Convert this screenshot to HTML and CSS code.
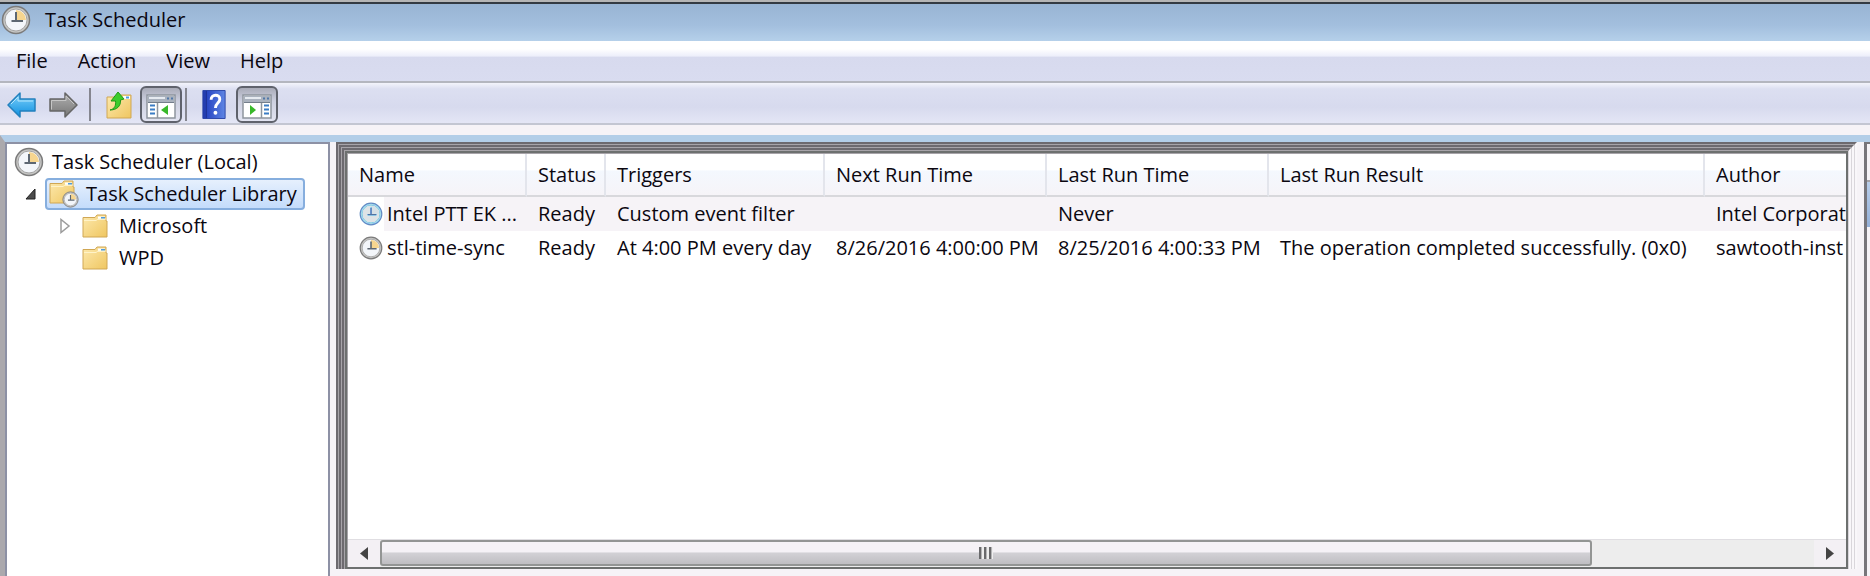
FILE: index.html
```
<!DOCTYPE html>
<html lang="en">
<head>
<meta charset="utf-8">
<title>Task Scheduler</title>
<link rel="stylesheet" href="styles.css">
</head>
<body>
<svg class="defs" aria-hidden="true">
  <defs>
    <linearGradient id="gold" x1="0" y1="0" x2="1" y2="1"><stop offset="0" stop-color="#fde9ae"/><stop offset="1" stop-color="#efc660"/></linearGradient>
    <linearGradient id="azure" x1="0" y1="0" x2="0" y2="1"><stop offset="0" stop-color="#7fd2fb"/><stop offset="1" stop-color="#0d8fe0"/></linearGradient>
    <linearGradient id="steel" x1="0" y1="0" x2="0" y2="1"><stop offset="0" stop-color="#b0b0b0"/><stop offset="1" stop-color="#767676"/></linearGradient>
    <linearGradient id="royal" x1="0" y1="0" x2="1" y2="0"><stop offset="0" stop-color="#2038a8"/><stop offset=".2" stop-color="#2a48c4"/><stop offset="1" stop-color="#5f86e4"/></linearGradient>
    <symbol id="clock" viewBox="0 0 30 30">
      <circle cx="15" cy="15" r="13.5" fill="#c6c6c4" stroke="#7b7b7b" stroke-width="1.5"/>
      <circle cx="15" cy="15" r="11" fill="#f3f6fa" stroke="#a4a4a4"/>
      <path d="M15 15V5a10 10 0 0 1 10 10z" fill="#f6d58f"/>
      <path d="M15 7v9.500M10.500 16h11.500" stroke="#5d6772" stroke-width="2" fill="none"/>
    </symbol>
    <symbol id="folder" viewBox="0 0 26 24">
      <path d="M1 3.500h12l2-2.500h9v6h1v16H1z" fill="url(#gold)" stroke="#d0a754"/>
      <path d="M16 2.500h7v3h-7z" fill="#fff"/><path d="M19 3h4v2h-4z" fill="#4c9be0"/>
      <path d="M2 6.500h12l2-1.500h8" fill="none" stroke="#fff3c8"/>
    </symbol>
    <symbol id="pane" viewBox="0 0 30 26">
      <path d="M1 2h28v23H1z" fill="#fff" stroke="#8e959f" stroke-width="1.500"/>
      <path d="M2 3h26v6H2z" fill="#aab2be"/><path d="M3 5h16" stroke="#e6eaf0" stroke-width="2"/>
      <path d="M21 4.500h2v2h-2zM25 4.500h2v2h-2z" fill="#5278a8"/>
      <path d="M2 9.500h26" stroke="#747e8b"/>
    </symbol>
  </defs>
</svg>

<header class="titlebar">
  <svg class="icon-clock"><use href="#clock"/></svg>
  <h1 class="title">Task Scheduler</h1>
</header>

<nav class="menubar" aria-label="Menu">
  <button class="menu">File</button>
  <button class="menu">Action</button>
  <button class="menu">View</button>
  <button class="menu">Help</button>
</nav>

<div class="toolbar" role="toolbar" aria-label="Tools">
  <button class="tool" aria-label="Back"><svg width="30" height="28" viewBox="0 0 30 28"><path d="M1 14L13 2v6h15v12H13v6z" fill="url(#azure)" stroke="#2380bd" stroke-width="1.500" stroke-linejoin="round"/><path d="M4 13l7-7v4h15" fill="none" stroke="#b4e6fd"/></svg></button>
  <button class="tool" aria-label="Forward"><svg width="30" height="28" viewBox="0 0 30 28"><path d="M29 14L17 2v6H2v12h15v6z" fill="url(#steel)" stroke="#666" stroke-width="1.500" stroke-linejoin="round"/><path d="M3.500 18.500V9.500H18V5l8 8" fill="none" stroke="#c6c6c6"/></svg></button>
  <span class="divider"></span>
  <button class="tool folder-up" aria-label="Up one level"><svg width="26" height="28" viewBox="0 0 26 28"><path d="M1 6h12l2-2h10v23H1z" fill="url(#gold)" stroke="#d0a754"/><path d="M17 5h7v3h-7z" fill="#fff"/><path d="M20 5.500h3v2h-3z" fill="#4c9be0"/><path d="M4 19c5-1 6-5 5.500-9H5l7-9 6 7-3.500 1C15 15 11 19 4 19z" fill="#3ccc2c" stroke="#239918"/></svg></button>
  <button class="tool toggle" aria-label="Show or hide console tree" aria-pressed="true"><svg width="30" height="26" viewBox="0 0 30 26"><use href="#pane"/><path d="M11.500 10v15" stroke="#8e959f" stroke-width="1.500"/><path d="M4 12.500h5M4 16.500h5M4 20.500h5" stroke="#3b7cc4" stroke-width="2"/><path d="M22 12v10l-7-5z" fill="#38b82a"/></svg></button>
  <span class="divider"></span>
  <button class="tool help" aria-label="Help"><svg width="24" height="29" viewBox="0 0 24 30"><path d="M.5.500h23v29H.5z" fill="url(#royal)" stroke="#2a45a8"/><path d="M4 1v28" stroke="#1b2e8c"/><path d="M9 10c0-6 9-6 9-.500 0 4-4.500 4-4.500 9" fill="none" stroke="#fff" stroke-width="3"/><circle cx="13.500" cy="23.500" r="2" fill="#fff"/></svg></button>
  <button class="tool toggle" aria-label="Show or hide action pane" aria-pressed="true"><svg width="30" height="26" viewBox="0 0 30 26"><use href="#pane"/><path d="M19.500 10v15" stroke="#8e959f" stroke-width="1.500"/><path d="M22 12.500h5M22 16.500h5M22 20.500h5" stroke="#3b7cc4" stroke-width="2"/><path d="M8 12v10l6-5z" fill="#38b82a"/></svg></button>
</div>

<main class="workspace">
  <nav class="tree" aria-label="Console tree">
    <ul class="level">
      <li>
        <div class="node root"><svg class="icon-clock"><use href="#clock"/></svg><span>Task Scheduler (Local)</span></div>
        <ul class="level">
          <li>
            <div class="node library">
              <svg class="expander" viewBox="0 0 11 12"><path d="M10 1v10H1z" fill="#4c4c4c" stroke="#222"/></svg>
              <span class="selected"><svg width="30" height="28" viewBox="0 0 30 28"><use href="#folder" width="26" height="24"/><use href="#clock" x="13" y="11" width="17" height="17"/></svg><span>Task Scheduler Library</span></span>
            </div>
            <ul class="level">
              <li><div class="node leaf"><svg class="expander" viewBox="0 0 11 16"><path d="M1 1.500v13l8-6.500z" fill="#fff" stroke="#9c9c9c" stroke-width="1.500"/></svg><svg class="icon-folder"><use href="#folder"/></svg><span>Microsoft</span></div></li>
              <li><div class="node leaf"><span class="expander"></span><svg class="icon-folder"><use href="#folder"/></svg><span>WPD</span></div></li>
            </ul>
          </li>
        </ul>
      </li>
    </ul>
  </nav>

  <div class="frame outer"><div class="frame"><div class="frame"><div class="frame inner">
    <section class="list" aria-label="Tasks">
      <div class="table-area">
        <table class="tasks">
          <colgroup><col class="c-name"><col class="c-status"><col class="c-triggers"><col class="c-time"><col class="c-time"><col class="c-result"><col></colgroup>
          <thead>
            <tr><th>Name</th><th>Status</th><th>Triggers</th><th>Next Run Time</th><th>Last Run Time</th><th>Last Run Result</th><th>Author</th></tr>
          </thead>
          <tbody>
            <tr class="shaded"><td><span class="task"><svg class="icon-task blue"><use href="#clock"/></svg><span>Intel PTT EK ...</span></span></td><td>Ready</td><td>Custom event filter</td><td></td><td>Never</td><td></td><td>Intel Corporat</td></tr>
            <tr><td><span class="task"><svg class="icon-task"><use href="#clock"/></svg><span>stl-time-sync</span></span></td><td>Ready</td><td>At 4:00 PM every day</td><td>8/26/2016 4:00:00 PM</td><td>8/25/2016 4:00:33 PM</td><td>The operation completed successfully. (0x0)</td><td>sawtooth-inst</td></tr>
          </tbody>
        </table>
      </div>
      <div class="scrollbar">
        <button class="arrow" aria-label="Scroll left"><svg width="8" height="13" viewBox="0 0 8 13"><path d="M8 0v13L0 6.500z" fill="#444"/></svg></button>
        <div class="track"><div class="thumb"><span class="grip"></span></div></div>
        <button class="arrow" aria-label="Scroll right"><svg width="8" height="13" viewBox="0 0 8 13"><path d="M0 0v13l8-6.500z" fill="#444"/></svg></button>
      </div>
    </section>
  </div></div></div></div>

  <aside class="actions" aria-label="Actions"><div class="actions-head"></div><div class="actions-group"></div></aside>
</main>
</body>
</html>
```
FILE: styles.css
```
* { box-sizing: border-box; }
body {
  margin: 0;
  height: 100vh;
  display: flex;
  flex-direction: column;
  overflow: hidden;
  background: #f6f3f7;
  color: #0b0710;
  font: 20px/32px "Open Sans", "Noto Sans", sans-serif;
}
button {
  margin: 0;
  padding: 0;
  border: 0;
  background: none;
  color: inherit;
  font: inherit;
}
svg { display: block; flex: none; }
.defs { position: absolute; width: 0; height: 0; }
.icon-clock { width: 30px; height: 30px; }

.titlebar {
  display: flex;
  align-items: center;
  gap: 14px;
  height: 41px;
  padding: 0 1px 3px;
  border-top: 2px solid #b5b5b5;
  background: linear-gradient(#333a42 2px, #98b4d3 2px, #a3bfde 60%, #b5d0ea);
}
.title { margin: 0; font-size: 20px; font-weight: 400; }

.menubar {
  display: flex;
  gap: 30px;
  height: 42px;
  padding: 4px 16px;
  border-bottom: 2px solid #b4b6bf;
  background: linear-gradient(#fff 20%, #eceefa 38%, #d7daee 40%, #d9dcf0);
}

.toolbar {
  display: flex;
  align-items: center;
  height: 42px;
  padding: 3px 7px 0;
  border-bottom: 2px solid #c3c6d2;
  background: linear-gradient(#f3f4fb, #dcdff1 15%, #d7daee 60%, #e4e6f6);
}
.tool { display: flex; margin-right: 11px; }
.divider { width: 2px; height: 33px; background: #85868f; }
.folder-up { margin: 0 8px 0 15px; }
.help { margin: 0 10px 0 15px; }
.toggle {
  align-items: center;
  justify-content: center;
  width: 42px;
  height: 37px;
  margin-right: 3px;
  padding-top: 3px;
  border: 2px solid #5f626c;
  border-radius: 6px;
  background: linear-gradient(#a9abb8, #cdd0e0 40%, #e2e4f2);
}

.workspace {
  flex: 1;
  min-height: 0;
  display: flex;
  margin-top: 10px;
  border-top: 7px solid #b3cee8;
  border-left: 5px solid #aba9ad;
}
.tree {
  flex: none;
  width: 325px;
  padding: 2px 0 0 7px;
  border: 2px solid #8d91a5;
  border-bottom: 0;
  background: #fff;
}
.level { margin: 0; padding: 0; list-style: none; }
.node { display: flex; align-items: center; height: 32px; white-space: nowrap; }
.root { gap: 8px; }
.library { gap: 9px; padding-left: 11px; }
.leaf { gap: 11px; padding-left: 46px; }
.expander { width: 11px; height: 16px; }
.icon-folder { width: 26px; height: 24px; }
.selected {
  display: flex;
  align-items: center;
  gap: 7px;
  height: 32px;
  padding: 0 6px 0 2px;
  border: 2px solid #86aede;
  border-radius: 4px;
  background: linear-gradient(#e6f0fd, #c4dcfb);
}

.frame {
  flex: 1;
  min-width: 0;
  display: flex;
  padding: 1px 1px 0;
  border: solid #6d6a6f;
  border-width: 2px 2px 0;
  border-right-color: #f9f7fa;
  box-shadow: inset 1px 1px #a7a4a9, inset -1px 0 #d9d6db;
}
.outer { margin: 0 7px 7px 6px; }
.inner {
  padding: 1px 0 0 1px;
  border-width: 2px;
  border-color: #6d706f;
}
.list { flex: 1; min-width: 0; display: flex; flex-direction: column; background: #fff; }
.table-area { flex: 1; overflow: hidden; }
.tasks { width: 100%; table-layout: fixed; border-collapse: separate; border-spacing: 0; }
.c-name { width: 179px; }
.c-status { width: 79px; }
.c-triggers { width: 219px; }
.c-time { width: 222px; }
.c-result { width: 436px; }
th, td {
  height: 34px;
  padding: 0 0 0 11px;
  font-weight: 400;
  text-align: left;
  white-space: nowrap;
  overflow: hidden;
}
th {
  height: 43px;
  border-right: 2px solid #e3e5ec;
  border-bottom: 2px solid #d8d8dc;
  background: linear-gradient(#fff 38%, #f4f8fe 42%, #f6f4f8);
}
th:last-child { border-right: 0; }
.shaded td { background: #f6f3f7; }
.shaded td:first-child { background: linear-gradient(90deg, #fff 36px, #f6f3f7 36px); }
.task { display: flex; align-items: center; gap: 4px; }
.icon-task { width: 24px; height: 24px; }
.blue { filter: sepia(1) hue-rotate(175deg) saturate(2) brightness(.9); }

.scrollbar { display: flex; height: 28px; border-top: 1px solid #e0dee2; background: #ededed; }
.arrow { display: flex; align-items: center; justify-content: center; width: 32px; background: #f3f0f4; }
.track { flex: 1; display: flex; }
.thumb {
  display: flex;
  align-items: center;
  justify-content: center;
  width: 1212px;
  max-width: 84.5%;
  height: 26px;
  border: 2px solid #939594;
  border-radius: 3px;
  background: linear-gradient(#f5f2f6 45%, #d2d1d5 50%, #bfbec2);
}
.grip { width: 14px; height: 12px; background: repeating-linear-gradient(90deg, #6a6a6c 0 2px, #b5b5b7 2px 3px, #eeeeee 3px 5px); }

.actions { flex: none; width: 6px; border: 2px solid #77757a; border-width: 2px 0 0 3px; background: #f6f3f7; }
.actions-head { height: 38px; border-bottom: 2px solid #a5a3a8; }
.actions-group { height: 45px; background: linear-gradient(#b8cde9, #94b0d8); }
```
